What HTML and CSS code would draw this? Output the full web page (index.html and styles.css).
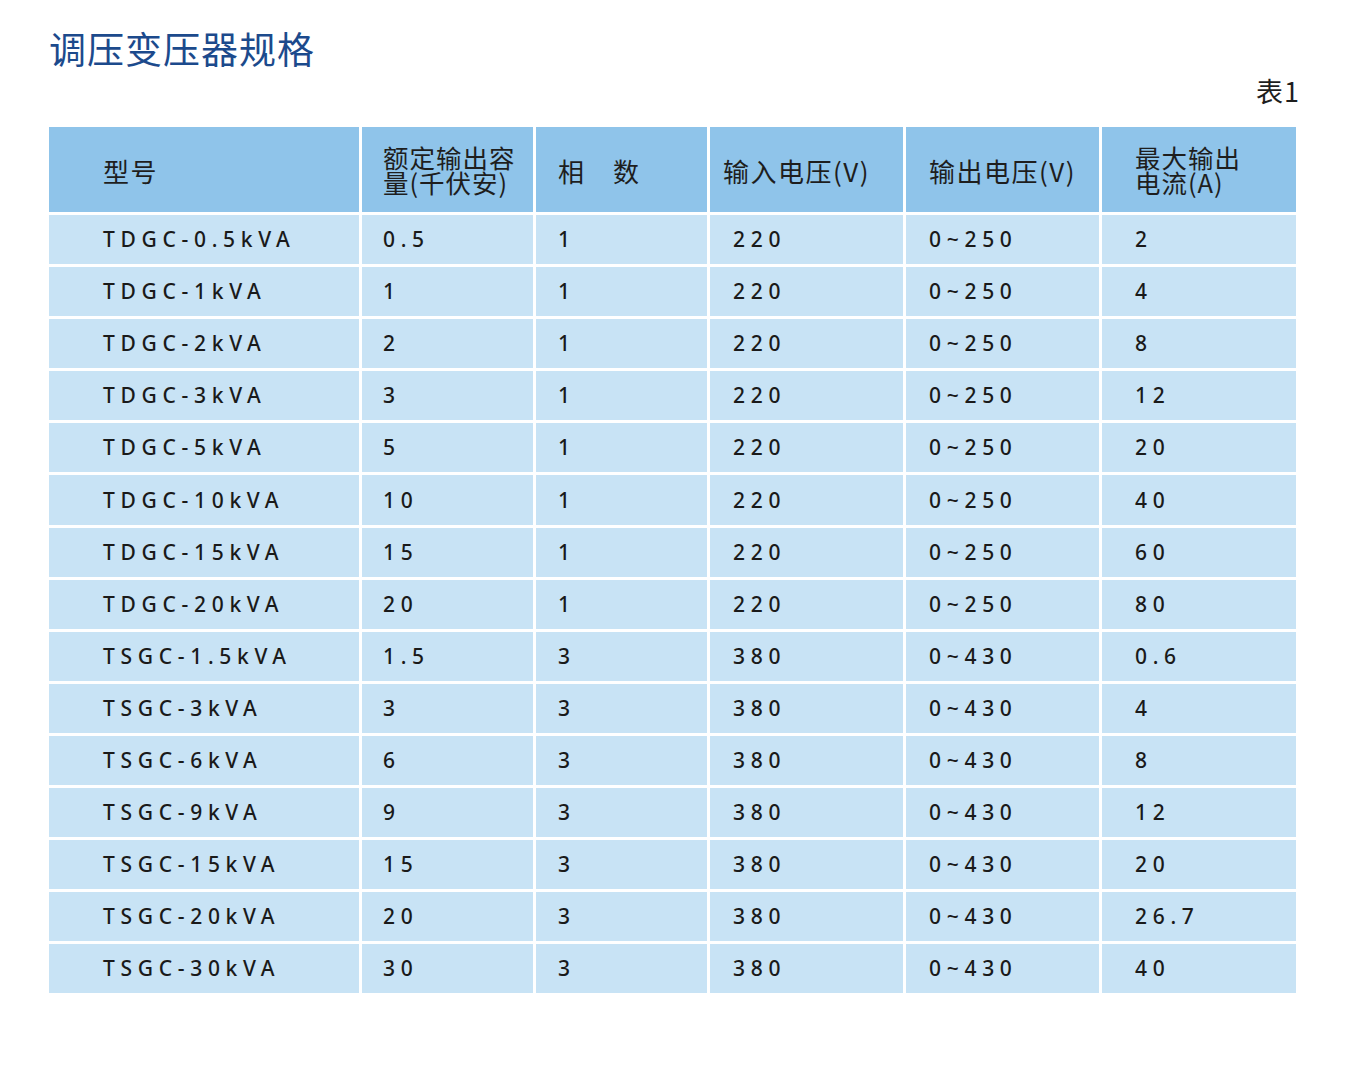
FILE: index.html
```html
<!DOCTYPE html>
<html lang="zh">
<head>
<meta charset="utf-8">
<title>调压变压器规格</title>
<link rel="stylesheet" href="styles.css">
</head>
<body>
<div class="page">
  <h1 class="title">调压变压器规格</h1>
  <div class="caption">表1</div>
  <table class="spec">
    <colgroup>
      <col class="c1"><col class="c2"><col class="c3"><col class="c4"><col class="c5"><col class="c6">
    </colgroup>
    <thead>
      <tr>
        <th class="p1">型号</th>
        <th class="p2 two"><span class="ln">额定输出容</span><span class="ln">量(千伏安)</span></th>
        <th class="p3">相　数</th>
        <th class="p4h">输入电压(V)</th>
        <th class="p5">输出电压(V)</th>
        <th class="p6 two"><span class="ln">最大输出</span><span class="ln">电流(A)</span></th>
      </tr>
    </thead>
    <tbody>
      <tr><td class="p1">TDGC-0.5kVA</td><td class="p2">0.5</td><td class="p3">1</td><td class="p4">220</td><td class="p5">0~250</td><td class="p6">2</td></tr>
      <tr><td class="p1">TDGC-1kVA</td><td class="p2">1</td><td class="p3">1</td><td class="p4">220</td><td class="p5">0~250</td><td class="p6">4</td></tr>
      <tr><td class="p1">TDGC-2kVA</td><td class="p2">2</td><td class="p3">1</td><td class="p4">220</td><td class="p5">0~250</td><td class="p6">8</td></tr>
      <tr><td class="p1">TDGC-3kVA</td><td class="p2">3</td><td class="p3">1</td><td class="p4">220</td><td class="p5">0~250</td><td class="p6">12</td></tr>
      <tr><td class="p1">TDGC-5kVA</td><td class="p2">5</td><td class="p3">1</td><td class="p4">220</td><td class="p5">0~250</td><td class="p6">20</td></tr>
      <tr><td class="p1">TDGC-10kVA</td><td class="p2">10</td><td class="p3">1</td><td class="p4">220</td><td class="p5">0~250</td><td class="p6">40</td></tr>
      <tr><td class="p1">TDGC-15kVA</td><td class="p2">15</td><td class="p3">1</td><td class="p4">220</td><td class="p5">0~250</td><td class="p6">60</td></tr>
      <tr><td class="p1">TDGC-20kVA</td><td class="p2">20</td><td class="p3">1</td><td class="p4">220</td><td class="p5">0~250</td><td class="p6">80</td></tr>
      <tr><td class="p1">TSGC-1.5kVA</td><td class="p2">1.5</td><td class="p3">3</td><td class="p4">380</td><td class="p5">0~430</td><td class="p6">0.6</td></tr>
      <tr><td class="p1">TSGC-3kVA</td><td class="p2">3</td><td class="p3">3</td><td class="p4">380</td><td class="p5">0~430</td><td class="p6">4</td></tr>
      <tr><td class="p1">TSGC-6kVA</td><td class="p2">6</td><td class="p3">3</td><td class="p4">380</td><td class="p5">0~430</td><td class="p6">8</td></tr>
      <tr><td class="p1">TSGC-9kVA</td><td class="p2">9</td><td class="p3">3</td><td class="p4">380</td><td class="p5">0~430</td><td class="p6">12</td></tr>
      <tr><td class="p1">TSGC-15kVA</td><td class="p2">15</td><td class="p3">3</td><td class="p4">380</td><td class="p5">0~430</td><td class="p6">20</td></tr>
      <tr><td class="p1">TSGC-20kVA</td><td class="p2">20</td><td class="p3">3</td><td class="p4">380</td><td class="p5">0~430</td><td class="p6">26.7</td></tr>
      <tr><td class="p1">TSGC-30kVA</td><td class="p2">30</td><td class="p3">3</td><td class="p4">380</td><td class="p5">0~430</td><td class="p6">40</td></tr>
    </tbody>
  </table>
</div>
</body>
</html>
```

FILE: styles.css
```css
* { box-sizing: border-box; }
html, body { margin: 0; padding: 0; background: #fff; }
body {
  font-family: "Noto Sans", "Noto Sans CJK SC", sans-serif;
  color: #1e1e1e;
}
.page {
  width: 1352px;
  padding: 26px 0 0 0;
}
.title {
  margin: 0 0 0 49px;
  font-family: "Noto Sans CJK SC", sans-serif;
  font-weight: 400;
  font-size: 37px;
  line-height: 44px;
  color: #1c4a8c;
  letter-spacing: 1px;
}
.caption {
  margin: 5px 52px 0 0;
  text-align: right;
  font-family: "Noto Sans CJK SC", sans-serif;
  font-size: 27px;
  line-height: 32px;
  letter-spacing: 1px;
  color: #1e1e1e;
}
.spec {
  margin: 17px 0 0 46px;
  border-collapse: separate;
  border-spacing: 3px;
  table-layout: fixed;
  width: 1253px;
}
.c1 { width: 310px; }
.c2 { width: 171px; }
.c3 { width: 171px; }
.c4 { width: 193px; }
.c5 { width: 193px; }
.c6 { width: 194px; }
.spec th {
  background: #8fc4ea;
  height: 85px;
  font-family: "Noto Sans CJK SC", sans-serif;
  font-weight: 400;
  font-size: 26px;
  line-height: 28px;
  letter-spacing: 1.5px;
  text-align: left;
  vertical-align: middle;
  color: #1e1e1e;
  padding-top: 4px;
  white-space: nowrap;
}
.spec th.two {
  font-size: 25.5px;
  line-height: 25.5px;
  letter-spacing: 1px;
  padding-top: 0;
}
.ln {
  display: block;
  height: 25.5px;
  overflow: visible;
}
.spec td {
  background: #c8e3f5;
  height: 49.1px;
  font-size: 21px;
  font-weight: 500;
  line-height: 24px;
  letter-spacing: 5.7px;
  vertical-align: middle;
  padding-top: 0;
  white-space: nowrap;
  color: #1a1a1a;
}
.p1 { padding-left: 54px; }
.p2 { padding-left: 21px; }
.p3 { padding-left: 22px; }
.p4 { padding-left: 23px; }
.p4h { padding-left: 13px; }
.p5 { padding-left: 23px; }
.p6 { padding-left: 33px; }
```
